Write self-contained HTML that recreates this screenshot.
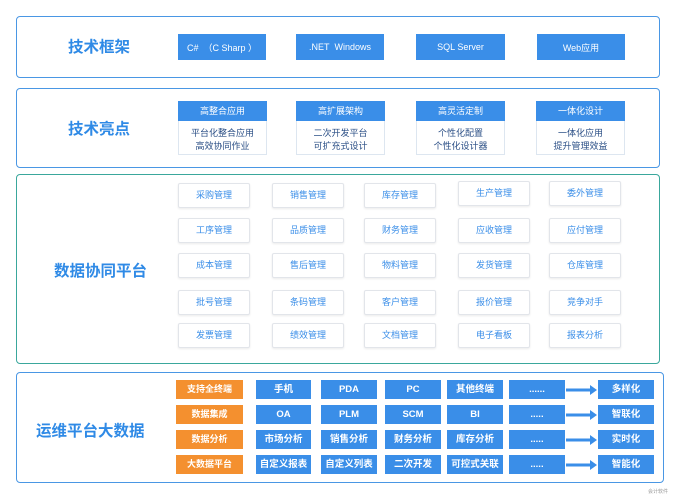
<!DOCTYPE html>
<html><head><meta charset="utf-8"><style>
*{margin:0;padding:0;box-sizing:border-box}
body{width:677px;height:500px;background:#fff;position:relative;overflow:hidden;font-family:"Liberation Sans","Noto Sans CJK SC",sans-serif}
.p{position:absolute;border:1.5px solid #4a97e4;border-radius:4px;background:#fff}
.t{position:absolute;color:#2f8ae6;font-weight:bold;font-size:15.5px;white-space:nowrap;line-height:18px}
.b{position:absolute;background:#3a8ee8;color:#fff;font-size:9px;display:flex;align-items:center;justify-content:center;white-space:nowrap}
.h{position:absolute;background:#3a8ee8;color:#fff;font-size:9px;text-align:center;line-height:20px;height:20px}
.bd{position:absolute;border:1px solid #dde6f0;border-top:none;background:#fff;color:#2b4f86;font-size:9px;text-align:center;line-height:13px;padding-top:6px}
.c{position:absolute;width:72px;height:25px;border:1px solid #e2e5ea;border-radius:2px;box-shadow:0 1px 2px rgba(0,0,0,.08);color:#3a8ee8;font-size:9px;text-align:center;line-height:23px;background:#fff}
.o{position:absolute;background:#f4902f;color:#fff;font-size:9px;font-weight:bold;text-align:center;line-height:19px;height:19px;width:67px;left:176px}
.q{position:absolute;background:#3a8ee8;color:#fff;font-size:9.5px;font-weight:bold;text-align:center;line-height:19px;height:19px}
.ar{position:absolute;left:566px;width:32px;height:12px}
</style></head><body>

<div class="p" style="left:16px;top:16px;width:644px;height:62px"></div>
<div class="t" style="left:68px;top:39px">技术框架</div>
<div class="b" style="left:178px;top:34px;width:88px;height:26px">C#&nbsp;&nbsp;（C Sharp ）</div>
<div class="b" style="left:296px;top:34px;width:88px;height:26px">.NET&nbsp; Windows</div>
<div class="b" style="left:416px;top:34px;width:89px;height:26px">SQL Server</div>
<div class="b" style="left:537px;top:34px;width:88px;height:26px">Web应用</div>

<div class="p" style="left:16px;top:88px;width:644px;height:80px"></div>
<div class="t" style="left:68px;top:121px">技术亮点</div>
<div class="h" style="left:178px;top:101px;width:89px">高整合应用</div>
<div class="bd" style="left:178px;top:121px;width:89px;height:34px">平台化整合应用<br>高效协同作业</div>
<div class="h" style="left:296px;top:101px;width:89px">高扩展架构</div>
<div class="bd" style="left:296px;top:121px;width:89px;height:34px">二次开发平台<br>可扩充式设计</div>
<div class="h" style="left:416px;top:101px;width:89px">高灵活定制</div>
<div class="bd" style="left:416px;top:121px;width:89px;height:34px">个性化配置<br>个性化设计器</div>
<div class="h" style="left:536px;top:101px;width:89px">一体化设计</div>
<div class="bd" style="left:536px;top:121px;width:89px;height:34px">一体化应用<br>提升管理效益</div>

<div class="p" style="left:16px;top:174px;width:644px;height:190px;border-color:#3aa79c"></div>
<div class="t" style="left:54px;top:263px">数据协同平台</div>

<div class="c" style="left:178px;top:183px">采购管理</div>
<div class="c" style="left:272px;top:183px">销售管理</div>
<div class="c" style="left:364px;top:183px">库存管理</div>
<div class="c" style="left:458px;top:181px">生产管理</div>
<div class="c" style="left:549px;top:181px">委外管理</div>
<div class="c" style="left:178px;top:218px">工序管理</div>
<div class="c" style="left:272px;top:218px">品质管理</div>
<div class="c" style="left:364px;top:218px">财务管理</div>
<div class="c" style="left:458px;top:218px">应收管理</div>
<div class="c" style="left:549px;top:218px">应付管理</div>
<div class="c" style="left:178px;top:253px">成本管理</div>
<div class="c" style="left:272px;top:253px">售后管理</div>
<div class="c" style="left:364px;top:253px">物料管理</div>
<div class="c" style="left:458px;top:253px">发货管理</div>
<div class="c" style="left:549px;top:253px">仓库管理</div>
<div class="c" style="left:178px;top:290px">批号管理</div>
<div class="c" style="left:272px;top:290px">条码管理</div>
<div class="c" style="left:364px;top:290px">客户管理</div>
<div class="c" style="left:458px;top:290px">报价管理</div>
<div class="c" style="left:549px;top:290px">竞争对手</div>
<div class="c" style="left:178px;top:323px">发票管理</div>
<div class="c" style="left:272px;top:323px">绩效管理</div>
<div class="c" style="left:364px;top:323px">文档管理</div>
<div class="c" style="left:458px;top:323px">电子看板</div>
<div class="c" style="left:549px;top:323px">报表分析</div>

<div class="p" style="left:16px;top:372px;width:648px;height:111px"></div>
<div class="t" style="left:36px;top:423px">运维平台大数据</div>

<div class="o" style="top:380px">支持全终端</div>
<div class="o" style="top:405px">数据集成</div>
<div class="o" style="top:430px">数据分析</div>
<div class="o" style="top:455px">大数据平台</div>

<div class="q" style="left:256px;top:380px;width:55px">手机</div>
<div class="q" style="left:321px;top:380px;width:56px">PDA</div>
<div class="q" style="left:385px;top:380px;width:56px">PC</div>
<div class="q" style="left:447px;top:380px;width:56px">其他终端</div>
<div class="q" style="left:509px;top:380px;width:56px">......</div>
<div class="q" style="left:598px;top:380px;width:56px">多样化</div>

<div class="q" style="left:256px;top:405px;width:55px">OA</div>
<div class="q" style="left:321px;top:405px;width:56px">PLM</div>
<div class="q" style="left:385px;top:405px;width:56px">SCM</div>
<div class="q" style="left:447px;top:405px;width:56px">BI</div>
<div class="q" style="left:509px;top:405px;width:56px">.....</div>
<div class="q" style="left:598px;top:405px;width:56px">智联化</div>

<div class="q" style="left:256px;top:430px;width:55px">市场分析</div>
<div class="q" style="left:321px;top:430px;width:56px">销售分析</div>
<div class="q" style="left:385px;top:430px;width:56px">财务分析</div>
<div class="q" style="left:447px;top:430px;width:56px">库存分析</div>
<div class="q" style="left:509px;top:430px;width:56px">.....</div>
<div class="q" style="left:598px;top:430px;width:56px">实时化</div>

<div class="q" style="left:256px;top:455px;width:55px">自定义报表</div>
<div class="q" style="left:321px;top:455px;width:56px">自定义列表</div>
<div class="q" style="left:385px;top:455px;width:56px">二次开发</div>
<div class="q" style="left:447px;top:455px;width:56px">可控式关联</div>
<div class="q" style="left:509px;top:455px;width:56px">.....</div>
<div class="q" style="left:598px;top:455px;width:56px">智能化</div>

<svg class="ar" style="top:384px" viewBox="0 0 32 12"><path d="M0 4.5H24V1L31 6L24 11V7.5H0Z" fill="#3a8ee8"/></svg>
<svg class="ar" style="top:409px" viewBox="0 0 32 12"><path d="M0 4.5H24V1L31 6L24 11V7.5H0Z" fill="#3a8ee8"/></svg>
<svg class="ar" style="top:434px" viewBox="0 0 32 12"><path d="M0 4.5H24V1L31 6L24 11V7.5H0Z" fill="#3a8ee8"/></svg>
<svg class="ar" style="top:459px" viewBox="0 0 32 12"><path d="M0 4.5H24V1L31 6L24 11V7.5H0Z" fill="#3a8ee8"/></svg>

<div style="position:absolute;left:648px;top:488px;font-size:5px;color:#999">会计软件</div>
</body></html>
